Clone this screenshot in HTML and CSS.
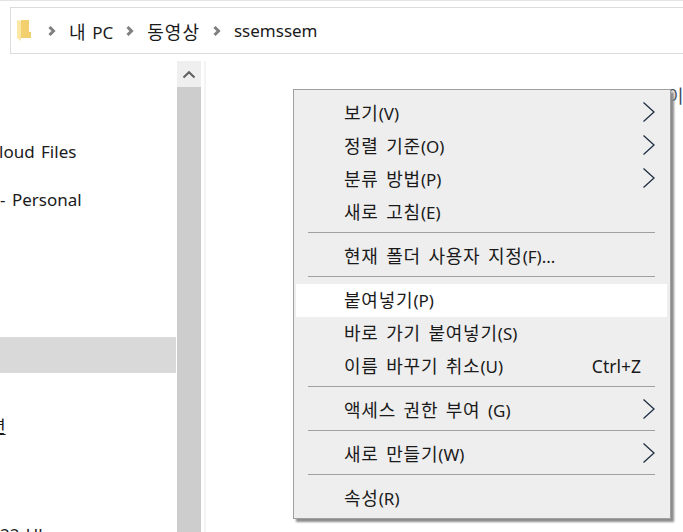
FILE: index.html
```html
<!DOCTYPE html>
<html lang="ko">
<head>
    <meta charset="UTF-8">
    <title>ssemssem</title>
    <link rel="stylesheet" href="styles.css">
</head>
<body>
    <div class="window">
        <div class="addressbar">
            <svg class="foldericon" width="14" height="21" viewBox="0 0 14 21">
                <path d="M4 0H12V12H14V18H4Z" fill="#f3d06e"/>
                <path d="M0 0L4 1V21L0 18Z" fill="#fbe8a6"/>
            </svg>
            <svg class="crumbsep" width="8" height="10" viewBox="0 0 8 10"><path d="M1.500 1L5.500 5L1.500 9" fill="none" stroke="#808080" stroke-width="3"/></svg>
            <span class="crumb">내 <span class="key">PC</span></span>
            <svg class="crumbsep" width="8" height="10" viewBox="0 0 8 10"><path d="M1.500 1L5.500 5L1.500 9" fill="none" stroke="#808080" stroke-width="3"/></svg>
            <span class="crumb">동영상</span>
            <svg class="crumbsep" width="8" height="10" viewBox="0 0 8 10"><path d="M1.500 1L5.500 5L1.500 9" fill="none" stroke="#808080" stroke-width="3"/></svg>
            <span class="crumb key">ssemssem</span>
        </div>
        <div class="main">
            <div class="nav">
                <div class="navitem first">loud Files</div>
                <div class="navitem">- Personal</div>
                <div class="navitem selected"></div>
                <div class="navitem under">년</div>
                <div class="navitem">22 Uh</div>
            </div>
            <div class="scrollbar">
                <div class="scrollup">
                    <svg width="14" height="9" viewBox="0 0 14 9"><path d="M1.500 7.500L7 2.200L12.500 7.500" fill="none" stroke="#606060" stroke-width="2"/></svg>
                </div>
                <div class="scrollthumb"></div>
            </div>
            <div class="content">
                <span class="peek">이</span>
                <div class="menu">
                    <div class="item">보기<span class="key">(V)</span><svg class="arrow" width="12" height="20" viewBox="0 0 12 20"><path d="M0.500 0.500L11 10L0.500 19.500" fill="none" stroke="#1f2f44" stroke-width="1.300"/></svg></div>
                    <div class="item">정렬 기준<span class="key">(O)</span><svg class="arrow" width="12" height="20" viewBox="0 0 12 20"><path d="M0.500 0.500L11 10L0.500 19.500" fill="none" stroke="#1f2f44" stroke-width="1.300"/></svg></div>
                    <div class="item">분류 방법<span class="key">(P)</span><svg class="arrow" width="12" height="20" viewBox="0 0 12 20"><path d="M0.500 0.500L11 10L0.500 19.500" fill="none" stroke="#1f2f44" stroke-width="1.300"/></svg></div>
                    <div class="item">새로 고침<span class="key">(E)</span></div>
                    <div class="sep"></div>
                    <div class="item">현재 폴더 사용자 지정<span class="key">(F)...</span></div>
                    <div class="sep"></div>
                    <div class="item hot">붙여넣기<span class="key">(P)</span></div>
                    <div class="item">바로 가기 붙여넣기<span class="key">(S)</span></div>
                    <div class="item">이름 바꾸기 취소<span class="key">(U)</span><span class="shortcut">Ctrl+Z</span></div>
                    <div class="sep"></div>
                    <div class="item">액세스 권한 부여 <span class="key">(G)</span><svg class="arrow" width="12" height="20" viewBox="0 0 12 20"><path d="M0.500 0.500L11 10L0.500 19.500" fill="none" stroke="#1f2f44" stroke-width="1.300"/></svg></div>
                    <div class="sep"></div>
                    <div class="item">새로 만들기<span class="key">(W)</span><svg class="arrow" width="12" height="20" viewBox="0 0 12 20"><path d="M0.500 0.500L11 10L0.500 19.500" fill="none" stroke="#1f2f44" stroke-width="1.300"/></svg></div>
                    <div class="sep"></div>
                    <div class="item">속성<span class="key">(R)</span></div>
                </div>
            </div>
        </div>
    </div>
</body>
</html>
```

FILE: styles.css
```css
*{
    margin: 0;
    padding: 0;
    box-sizing: border-box;
}
body{
    width: 683px;
    height: 532px;
    overflow: hidden;
    background: #fff;
    color: #1a1a1a;
    font-family: "Noto Sans", "Noto Sans CJK KR", sans-serif;
    font-size: 17px;
    word-spacing: 2px;
}
.window{
    height: 532px;
    padding-top: 1px;
    display: flex;
    flex-direction: column;
    border-top: 1px solid #e3e3e3;
}
.addressbar{
    height: 47px;
    margin: 5px 0 7px 10px;
    border: 1px solid #dcdcdc;
    border-right: none;
    display: flex;
    align-items: center;
    padding-left: 6px;
}
.foldericon{
    flex: none;
}
.crumb{
    font-size: 18px;
    letter-spacing: 1px;
    word-spacing: 0;
}
.key, .crumb.key{
    font-size: 17px;
    letter-spacing: 0;
}
.crumbsep{
    flex: none;
    margin: 0 13px 0 13px;
}
.foldericon + .crumbsep{
    margin-left: 17px;
}
.main{
    flex: 1;
    display: flex;
    min-height: 0;
}
.nav{
    width: 177px;
    overflow: hidden;
}
.navitem{
    height: 36px;
    line-height: 36px;
    white-space: nowrap;
    margin-right: 1px;
    margin-bottom: 12px;
}
.navitem.first{
    margin-top: 73px;
    margin-left: -1px;
}
.navitem.selected{
    background: #d9d9d9;
    margin-top: 119px;
    margin-bottom: 36px;
}
.navitem.under{
    margin-left: -10px;
    text-decoration: underline;
    margin-bottom: 72px;
}
.scrollbar{
    width: 24px;
    display: flex;
    flex-direction: column;
}
.scrollup{
    height: 26px;
    background: #efefef;
    display: flex;
    align-items: center;
    justify-content: center;
}
.scrollthumb{
    flex: 1;
    background: #cdcdcd;
}
.content{
    flex: 1;
    position: relative;
    margin-left: 3px;
    border-left: 2px solid #f4f4f4;
}
.peek{
    position: absolute;
    left: 461px;
    top: 25px;
    line-height: 20px;
    font-size: 18px;
    color: #44505c;
}
.menu{
    position: absolute;
    left: 87px;
    top: 28px;
    width: 378px;
    height: 430px;
    padding-top: 7px;
    background: #eeeeee;
    border: 1px solid #a0a0a0;
    box-shadow: 3px 3px 2px #8c8c8c;
    font-size: 18px;
    letter-spacing: 0.800px;
    word-spacing: 2px;
}
.item{
    position: relative;
    height: 33px;
    line-height: 33px;
    margin: 0 3px 0 2px;
    padding-left: 48px;
    white-space: nowrap;
}
.item.hot{
    background: #fff;
}
.arrow{
    position: absolute;
    right: 12px;
    top: 5px;
}
.shortcut{
    position: absolute;
    right: 26px;
    font-size: 17.500px;
    letter-spacing: 0;
}
.sep{
    height: 1px;
    margin: 3px 15px 7px 14px;
    background: #a0a0a0;
}
```
